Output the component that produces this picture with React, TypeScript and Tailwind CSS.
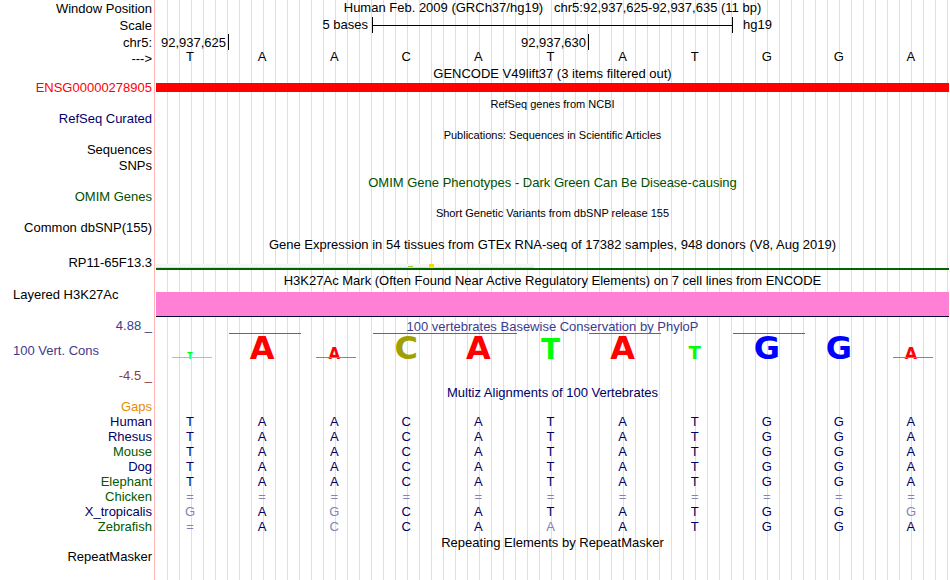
import React from "react";

const FONT = "font-['Liberation_Sans',Arial,sans-serif]";
const GRID =
  "bg-[repeating-linear-gradient(to_right,transparent_0px,transparent_11px,#dcdcf8_11px,#dcdcf8_12px)]";

type RowProps = {
  label?: React.ReactNode;
  labelClass?: string;
  className: string;
  children?: React.ReactNode;
};

function Row({ label, labelClass = "", className, children }: RowProps) {
  return (
    <div className={`flex ${className}`}>
      <div className="w-[155px] shrink-0 border-r border-[#ffb4b4]">
        {label && (
          <div className={`whitespace-nowrap pr-0.5 text-right ${labelClass}`}>{label}</div>
        )}
      </div>
      <div className={`mx-px min-w-0 flex-1 ${GRID}`}>{children}</div>
    </div>
  );
}

function Title({ className = "", children }: { className?: string; children: React.ReactNode }) {
  return <h2 className={`whitespace-nowrap text-center ${className}`}>{children}</h2>;
}

function Bases({ seq, faint = "" }: { seq: string; faint?: string }) {
  return (
    <div className="grid grid-cols-11">
      {seq.split("").map((base, i) => (
        <span
          key={i}
          className={`pr-1 text-center ${base === "=" || faint[i] === "x" ? "text-[#8484b4]" : ""}`}
        >
          {base}
        </span>
      ))}
    </div>
  );
}

const NAVY = "text-[#000064]";
const GREEN = "text-[#005a00]";

const species = [
  { name: "Human", color: NAVY, seq: "TAACATATGGA", faint: "" },
  { name: "Rhesus", color: NAVY, seq: "TAACATATGGA", faint: "" },
  { name: "Mouse", color: GREEN, seq: "TAACATATGGA", faint: "" },
  { name: "Dog", color: NAVY, seq: "TAACATATGGA", faint: "" },
  { name: "Elephant", color: GREEN, seq: "TAACATATGGA", faint: "" },
  { name: "Chicken", color: GREEN, seq: "===========", faint: "" },
  { name: "X_tropicalis", color: NAVY, seq: "GAGCATATGGG", faint: "x-x-------x" },
  { name: "Zebrafish", color: GREEN, seq: "=ACCAAATGGA", faint: "--x--x-----" },
];

// One entry per base: letter size follows the score, "clipped" marks scores above the axis,
// "under" is the sliver of the runner-up base.
const logo = [
  { base: "T", style: "text-[8px] text-[#00ff00]", clipped: false, under: "bg-[#c8c06c]" },
  { base: "A", style: "text-[32px] text-[#ff0000]", clipped: true, under: "" },
  { base: "A", style: "text-[15px] text-[#ff0000]", clipped: false, under: "bg-[#7878ff]" },
  { base: "C", style: "text-[32px] text-[#a0a000]", clipped: true, under: "" },
  { base: "A", style: "text-[32px] text-[#ff0000]", clipped: true, under: "" },
  { base: "T", style: "text-[28px] text-[#00ff00]", clipped: false, under: "" },
  { base: "A", style: "text-[32px] text-[#ff0000]", clipped: true, under: "" },
  { base: "T", style: "text-[18px] text-[#00ff00]", clipped: false, under: "" },
  { base: "G", style: "text-[32px] text-[#0000ff]", clipped: true, under: "" },
  { base: "G", style: "text-[32px] text-[#0000ff]", clipped: false, under: "" },
  { base: "A", style: "text-[16px] text-[#ff0000]", clipped: false, under: "bg-[#7878ff]" },
];

function ConservationLogo() {
  return (
    <div className="relative">
      <div className="ml-px grid grid-cols-11">
        {logo.map((l, i) => (
          <span key={i} className={`h-px ${l.clipped ? "bg-[#ff00ff]" : ""}`} />
        ))}
      </div>
      <div className="grid grid-cols-11 items-baseline pt-0.5 font-['DejaVu_Sans',sans-serif] font-bold leading-[24px]">
        {logo.map((l, i) => (
          <span key={i} className={`pr-1 text-center leading-[24px] ${l.style}`}>
            {l.base}
          </span>
        ))}
      </div>
      <div className="absolute inset-x-0 top-6 grid grid-cols-11">
        {logo.map((l, i) => (
          <span key={i} className={`ml-4 mr-4 h-px ${l.under}`} />
        ))}
      </div>
    </div>
  );
}

export default function App() {
  return (
    <main
      className={`flex min-h-screen flex-col overflow-hidden bg-white text-[13px] leading-[15px] text-black ${FONT}`}
    >
      <Row className="h-[17px]" label="Window Position" labelClass="pt-px">
        <Title>Human Feb. 2009 (GRCh37/hg19) &nbsp; chr5:92,937,625-92,937,635 (11 bp)</Title>
      </Row>
      <Row className="h-[17px]" label="Scale" labelClass="pt-px">
        <div className="flex">
          <span className="w-[216px] pr-1 text-right">5 bases</span>
          <span className="flex h-4 w-[361px] items-center border-x border-black">
            <span className="h-px w-full bg-black" />
          </span>
          <span className="pl-2.5">hg19</span>
        </div>
      </Row>
      <Row className="h-[15px]" label="chr5:" labelClass="pt-px">
        <div className="flex">
          <span className="w-[73px] border-r border-black pr-0.5 pt-px text-right">92,937,625</span>
          <span className="w-[360px] border-r border-black pr-0.5 pt-px text-right">92,937,630</span>
        </div>
      </Row>
      <Row className="h-[17px]" label="--->" labelClass="pt-0.5">
        <Bases seq="TAACATATGGA" />
      </Row>

      <Row className="h-[14px]">
        <Title>GENCODE V49lift37 (3 items filtered out)</Title>
      </Row>
      <Row className="h-[16px]" label="ENSG00000278905" labelClass="text-[#ff0000]">
        <div className="flex h-full flex-col pt-[3px]">
          <div className="h-[9px] bg-[#ff0000]" />
        </div>
      </Row>
      <Row className="h-[15px]">
        <Title className="pt-px text-[11px]">RefSeq genes from NCBI</Title>
      </Row>
      <Row className="h-[16px]" label="RefSeq Curated" labelClass="text-[#00006e]" />
      <Row className="h-[15px]">
        <Title className="pt-px text-[11px]">Publications: Sequences in Scientific Articles</Title>
      </Row>
      <Row className="h-[16px]" label="Sequences" />
      <Row className="h-[17px]" label="SNPs" />
      <Row className="h-[14px]">
        <Title className="text-[#005000]">
          OMIM Gene Phenotypes - Dark Green Can Be Disease-causing
        </Title>
      </Row>
      <Row className="h-[17px]" label="OMIM Genes" labelClass="text-[#005000]" />
      <Row className="h-[14px]">
        <Title className="text-[11px]">Short Genetic Variants from dbSNP release 155</Title>
      </Row>
      <Row className="h-[17px]" label="Common dbSNP(155)" />

      <Row className="h-[18px]">
        <Title>
          Gene Expression in 54 tissues from GTEx RNA-seq of 17382 samples, 948 donors (V8, Aug 2019)
        </Title>
      </Row>
      <Row className="h-[18px]" label="RP11-65F13.3">
        <div className="pt-[9px]">
          <div className="flex h-1 w-[378px] items-end border-b border-[#dcdcdc] bg-[#f6f6f6]">
            <span className="ml-[252px] h-px w-[5px] bg-[#9acd32]" />
            <span className="ml-4 h-[3px] w-[5px] bg-[#ffd700]" />
          </div>
          <div className="h-0.5 bg-[#006400]" />
        </div>
      </Row>

      <Row className="h-[14px]">
        <Title>
          H3K27Ac Mark (Often Found Near Active Regulatory Elements) on 7 cell lines from ENCODE
        </Title>
      </Row>
      <Row
        className="h-[30px]"
        label={<div className="pl-[13px] text-left">Layered H3K27Ac</div>}
      >
        <div className="pt-[5px]">
          <div className="h-[25px] border-b border-[#00003c] bg-[#ff80d5]" />
        </div>
      </Row>

      <Row
        className="h-[68px]"
        labelClass="pt-px text-[#3c3c8c]"
        label={
          <div className="flex flex-col gap-2.5">
            <span>4.88 _</span>
            <span className="pl-[13px] text-left">100 Vert. Cons</span>
            <span className="text-[#8c3c3c]">-4.5 _</span>
          </div>
        }
      >
        <Title className="h-4 pt-0.5 text-[#3c3c8c]">
          100 vertebrates Basewise Conservation by PhyloP
        </Title>
        <ConservationLogo />
      </Row>

      <Row className="h-[14px]">
        <Title className={NAVY}>Multiz Alignments of 100 Vertebrates</Title>
      </Row>
      <Row className="h-[15px]" label="Gaps" labelClass="text-[#e68c00]" />
      {species.map((s) => (
        <Row key={s.name} className="h-[15px]" label={s.name} labelClass={s.color}>
          <div className={NAVY}>
            <Bases seq={s.seq} faint={s.faint} />
          </div>
        </Row>
      ))}

      <Row className="h-[15px]">
        <Title className="pt-px">Repeating Elements by RepeatMasker</Title>
      </Row>
      <Row className="min-h-4 flex-1" label="RepeatMasker" />
    </main>
  );
}
